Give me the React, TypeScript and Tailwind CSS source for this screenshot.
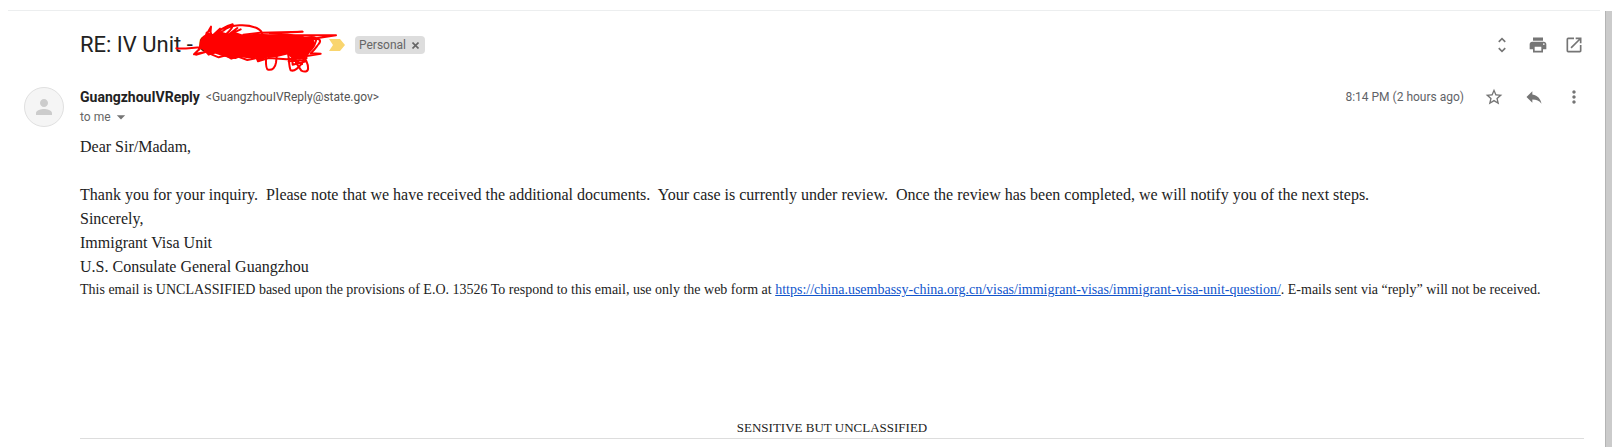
import {
  MdArrowDropDown,
  MdMoreVert,
  MdOpenInNew,
  MdPerson,
  MdPrint,
  MdReply,
  MdStarBorder,
  MdUnfoldMore,
} from "react-icons/md";

const formUrl =
  "https://china.usembassy-china.org.cn/visas/immigrant-visas/immigrant-visa-unit-question/";

const threadActions = [
  { label: "Expand all", Icon: MdUnfoldMore },
  { label: "Print all", Icon: MdPrint },
  { label: "In new window", Icon: MdOpenInNew },
];

const messageActions = [
  { label: "Star", Icon: MdStarBorder },
  { label: "Reply", Icon: MdReply },
  { label: "More", Icon: MdMoreVert },
];

// red marker strokes that hide the case number in the subject
const Scribble = () => {
  return (
    <svg
      className="absolute left-[92px] -top-[11px] h-[54px] w-[168px]"
      viewBox="36 30 504 162"
      fill="none"
      stroke="#ff0000"
      strokeWidth="6"
      strokeLinecap="round"
      strokeLinejoin="round"
      aria-hidden="true"
    >
      <path
        fill="#ff0000"
        d="M124 90 L132 80 L144 72 L160 80 L176 66 L204 74 L222 68 L250 78 L290 74 L330 76 L390 76 L432 82 L456 84 L462 100 L450 122 L440 136 L420 146 L396 142 L384 130 L350 138 L320 140 L296 152 L288 140 L264 142 L240 138 L226 144 L206 140 L190 136 L166 128 L146 134 L134 120 L120 110 Z"
      />
      <path d="M49 115 C68 118 90 114 124 112 L102 133 L136 126 L108 134 L158 118 M116 120 L126 96" />
      <path d="M128 94 L153 50 L150 84 L180 56 L168 88 L140 68 L132 100 M150 62 L158 84 L186 64" />
      <path d="M160 82 C176 60 198 48 218 43 C222 52 206 64 196 76 M190 62 C214 42 262 42 290 54 C302 60 310 68 306 82" />
      <path d="M206 74 L232 54 M216 70 L242 58 M250 74 L300 68 L428 65 L330 70 L400 76 L528 76 L474 84 L420 92" />
      <path d="M440 84 C456 78 474 82 468 92 C464 108 456 126 430 130 M462 88 C480 82 484 94 476 102 C468 112 464 120 452 130 L482 131 L440 138" />
      <path d="M156 134 L176 142 L198 136 L214 146 L234 140 L262 150 L290 144 L294 154 L326 144 L380 148 L440 144" />
      <path d="M318 140 C318 156 316 176 324 179 C338 182 346 172 348 158 L350 140" />
      <path d="M384 130 C388 150 386 168 392 181 C404 186 416 172 426 160 C436 148 430 140 416 134 C400 136 394 150 398 164 L438 154" />
      <path d="M404 132 L408 158 L424 182 C436 188 446 184 444 172 C444 158 436 146 428 134 M386 154 L436 150 M388 146 L426 162" />
    </svg>
  );
};

const App = () => {
  return (
    <div className="flex min-h-screen bg-white pt-[10px] font-['Roboto',sans-serif] text-[#222222]">
      <main className="ml-2 grow border-t border-[#eceeef] px-4">
        <header className="ml-14 flex h-[68px] items-center">
          <div className="relative w-60">
            <h1 className="text-[22px] leading-7">RE: IV Unit - G</h1>
            <Scribble />
          </div>
          <svg className="ml-[9px] h-3 w-4" viewBox="0 0 16 12" aria-hidden="true">
            <path fill="#f9d56e" d="M0 0 H11 L16 6 L11 12 H0 L4 6 Z" />
          </svg>
          <span className="ml-[10px] flex h-[18px] items-center gap-1 rounded bg-[#dddddd] px-1 text-xs text-[#666666]">
            Personal
            <button type="button" aria-label="Remove label Personal">
              <svg className="mx-0.5 size-[7px]" viewBox="0 0 7 7" aria-hidden="true">
                <path d="M0.5 0.5 L6.5 6.5 M6.5 0.5 L0.5 6.5" stroke="#666666" strokeWidth="1.6" />
              </svg>
            </button>
          </span>
          <div className="ml-auto flex gap-4 text-xl text-[#757575]">
            {threadActions.map(({ label, Icon }) => (
              <button key={label} type="button" aria-label={label}>
                <Icon />
              </button>
            ))}
          </div>
        </header>

        <article className="pt-2">
          <div className="flex gap-4">
            <div className="flex size-10 items-center justify-center rounded-full border border-[#e0e0e0] bg-[#f5f5f5] text-2xl text-[#cccccc]">
              <MdPerson />
            </div>
            <div className="leading-5">
              <div className="flex gap-1.5">
                <span className="text-sm font-bold">GuangzhouIVReply</span>
                <span className="text-xs leading-5 text-[#555555]">
                  &lt;GuangzhouIVReply@state.gov&gt;
                </span>
              </div>
              <button
                type="button"
                className="flex items-center text-xs leading-5 text-[#666666]"
                aria-label="Show details"
              >
                to me
                <MdArrowDropDown className="text-xl text-[#757575]" />
              </button>
            </div>
            <div className="ml-auto flex h-5 items-center gap-5 text-xl text-[#757575]">
              <span className="text-xs text-[#5f6368]">8:14 PM (2 hours ago)</span>
              {messageActions.map(({ label, Icon }) => (
                <button key={label} type="button" aria-label={label}>
                  <Icon />
                </button>
              ))}
            </div>
          </div>

          <div className="mt-2 ml-14 border-b border-[#dddddd] font-['Liberation_Serif',serif] leading-6">
            <p>Dear Sir/Madam,</p>
            <p className="mt-6 whitespace-pre-wrap">
              {"Thank you for your inquiry.  Please note that we have received the additional documents.  Your case is currently under review.  Once the review has been completed, we will notify you of the next steps."}
            </p>
            <p>Sincerely,</p>
            <p>Immigrant Visa Unit</p>
            <p>U.S. Consulate General Guangzhou</p>
            <p className="text-sm leading-[22px]">
              This email is UNCLASSIFIED based upon the provisions of E.O. 13526 To respond to this
              email, use only the web form at{" "}
              <a href={formUrl} className="text-[#1155cc] underline">
                {formUrl}
              </a>
              . E-mails sent via “reply” will not be received.
            </p>
            <p className="mt-[117px] text-center text-[13px] leading-5">
              SENSITIVE BUT UNCLASSIFIED
            </p>
          </div>
        </article>
      </main>
      <div className="mt-px ml-[5px] w-[7px] border-l border-[#b4b4b4] bg-[#cbcbcb]"></div>
    </div>
  );
};

export default App;
